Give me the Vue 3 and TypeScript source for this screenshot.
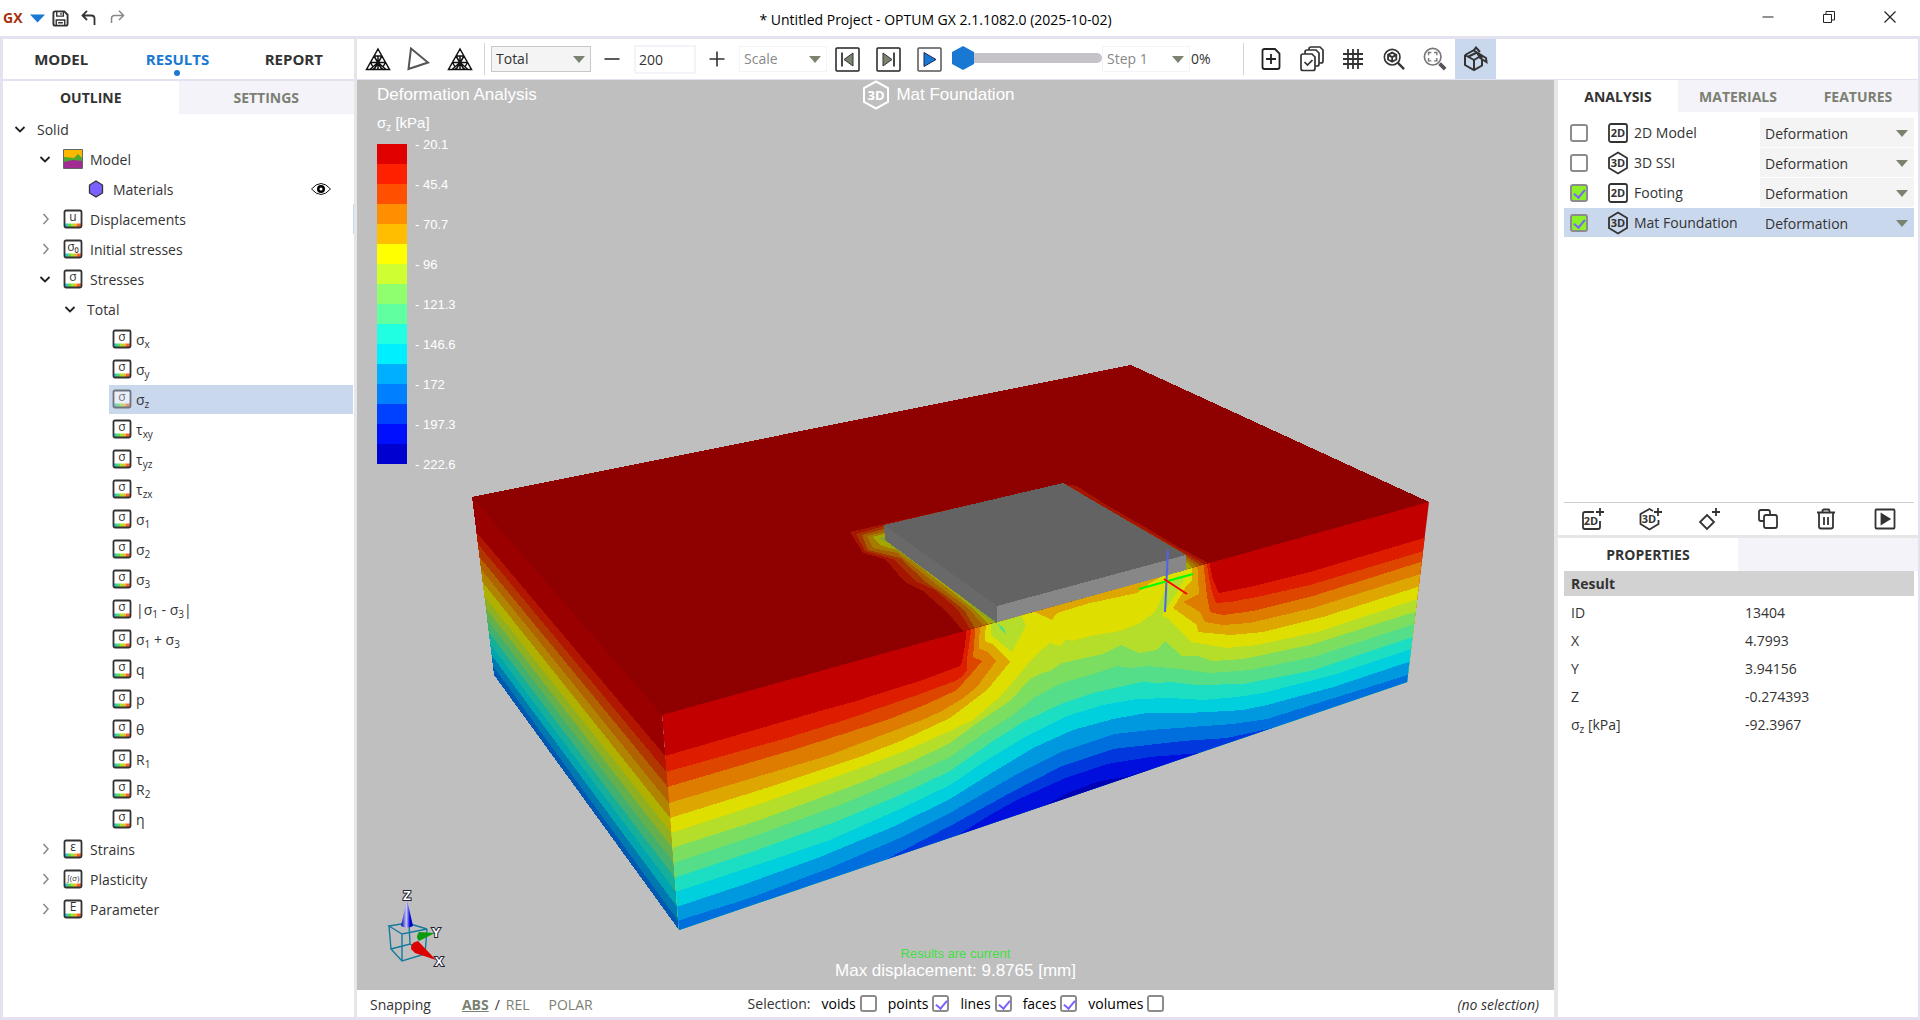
<script setup lang="ts">
import { ref } from 'vue'

interface TreeRow {
  id: string
  label: string
  kind: 'root' | 'group' | 'material' | 'sub' | 'leaf'
  open?: boolean
  glyph?: string
}

interface Analysis {
  id: string
  name: string
  dim: '2D' | '3D'
  checked: boolean
}

type Point = [number, number]

const mainTabs = ['MODEL', 'RESULTS', 'REPORT']
const sideTabs = ['ANALYSIS', 'MATERIALS', 'FEATURES']

const stressLabels = [
  'σ_x', 'σ_y', 'σ_z', 'τ_xy', 'τ_yz', 'τ_zx', 'σ_1', 'σ_2', 'σ_3',
  '|σ_1 - σ_3|', 'σ_1 + σ_3', 'q', 'p', 'θ', 'R_1', 'R_2', 'η',
]

const rows: TreeRow[] = [
  { id: 'solid', label: 'Solid', kind: 'root', open: true },
  { id: 'model', label: 'Model', kind: 'group', open: true },
  { id: 'materials', label: 'Materials', kind: 'material' },
  { id: 'displacements', label: 'Displacements', kind: 'group', glyph: 'u' },
  { id: 'initial', label: 'Initial stresses', kind: 'group', glyph: 'σ₀' },
  { id: 'stresses', label: 'Stresses', kind: 'group', open: true, glyph: 'σ' },
  { id: 'total', label: 'Total', kind: 'sub', open: true },
  ...stressLabels.map((label): TreeRow => ({ id: label, label, kind: 'leaf', glyph: 'σ' })),
  { id: 'strains', label: 'Strains', kind: 'group', glyph: 'ε' },
  { id: 'plasticity', label: 'Plasticity', kind: 'group', glyph: '∫(σ)' },
  { id: 'parameter', label: 'Parameter', kind: 'group', glyph: 'E' },
]

const selectedRow = ref('σ_z')
const scaleValue = ref('200')
const step = ref(0)

const analyses = ref<Analysis[]>([
  { id: 'a1', name: '2D Model', dim: '2D', checked: false },
  { id: 'a2', name: '3D SSI', dim: '3D', checked: false },
  { id: 'a3', name: 'Footing', dim: '2D', checked: true },
  { id: 'a4', name: 'Mat Foundation', dim: '3D', checked: true },
])

const properties = [
  { name: 'ID', value: '13404' },
  { name: 'X', value: '4.7993' },
  { name: 'Y', value: '3.94156' },
  { name: 'Z', value: '-0.274393' },
  { name: 'σ_z [kPa]', value: '-92.3967' },
]

const filters = ref([
  { name: 'voids', on: false },
  { name: 'points', on: true },
  { name: 'lines', on: true },
  { name: 'faces', on: true },
  { name: 'volumes', on: false },
])

/* "σ_x" becomes ['σ', 'x', '']: odd entries are subscripts. */
const parts = (label: string): string[] => label.split(/_([a-z]+|\d)/)

const legendColors = [
  '#e00000', '#ff2000', '#ff5000', '#ff8f00', '#ffbf00', '#ffff00', '#cfff30', '#8fff70',
  '#60ff9f', '#20ffdf', '#00efff', '#00afff', '#0080ff', '#0040ff', '#0010ff', '#0000cf',
]
const legendLabels = ['20.1', '45.4', '70.7', '96', '121.3', '146.6', '172', '197.3', '222.6']

const shade = (hex: string, factor: number): string => {
  const n = parseInt(hex.slice(1), 16)
  const c = [n >> 16, (n >> 8) & 255, n & 255].map((v) => Math.round(v * factor))
  return `rgb(${c.join(',')})`
}
const toPoints = (pts: Point[]): string => pts.map((p) => p.join(',')).join(' ')

/* Contour levels where they meet the left, front and right vertical edges. */
const leftEdge = [497, 532, 544, 557, 569, 582, 596, 608, 620, 632, 644, 655, 666]
const frontEdge = [715, 756, 772, 787, 803, 818, 833, 848, 863, 878, 892, 907, 921]

const leftBands = leftEdge.map((y, i) => {
  const f = frontEdge[i]
  const pts: Point[] = [
    [472 + (22 * (y - 497)) / 178, y],
    [662 + (17 * (f - 715)) / 215, f],
    [679, 930],
    [494, 675],
  ]
  return { color: shade(legendColors[i], 0.69), points: toPoints(pts) }
})

/* Upper boundary of each colour level on the front face. */
const levels: Point[][] = [
  [[660, 705], [1430, 492]],
  [[665, 756], [820, 711], [853, 702], [897, 688], [920, 681], [960, 666], [962, 662], [965, 645], [967, 625], [1209, 560], [1213, 580], [1219, 593], [1250, 587], [1310, 572], [1427, 537]],
  [[666, 772], [787, 738], [845, 720], [920, 694], [955, 681], [962, 677], [967, 670], [967, 660], [972, 624], [1206, 560], [1211, 588], [1216, 603], [1230, 602], [1257, 597], [1310, 585], [1427, 550]],
  [[667, 787], [793, 750], [887, 720], [927, 704], [957, 690], [972, 673], [982, 661], [973, 657], [976, 622], [1203, 560], [1207, 596], [1210, 612], [1223, 615], [1253, 611], [1313, 596], [1427, 560]],
  [[669, 803], [827, 756], [922, 720], [940, 712], [962, 699], [977, 687], [996, 661], [986, 651], [979, 649], [980, 620], [1197, 560], [1199, 594], [1193, 597], [1183, 602], [1200, 612], [1205, 622], [1223, 625], [1250, 623], [1313, 608], [1427, 572]],
  [[670, 818], [760, 790], [860, 757], [903, 740], [950, 718], [987, 690], [1010, 662], [992, 644], [985, 641], [986, 620], [1192, 560], [1192, 581], [1186, 586], [1182, 594], [1173, 608], [1197, 625], [1198, 632], [1230, 635], [1263, 632], [1323, 617], [1427, 584]],
  [[671, 833], [760, 804], [860, 768], [907, 750], [950, 731], [973, 720], [1002, 695], [1027, 665], [1039, 652], [1050, 643], [1060, 646], [1066, 639], [1072, 641], [1090, 636], [1120, 631], [1140, 623], [1155, 612], [1164, 592], [1177, 576], [1184, 576], [1183, 582], [1174, 597], [1162, 615], [1167, 618], [1191, 642], [1227, 648], [1257, 645], [1317, 632], [1427, 596]],
  [[672, 848], [760, 820], [860, 783], [913, 761], [950, 743], [980, 721], [1010, 701], [1030, 679], [1042, 673], [1050, 671], [1062, 663], [1103, 654], [1121, 645], [1139, 653], [1157, 650], [1165, 641], [1182, 656], [1197, 656], [1213, 661], [1243, 659], [1310, 645], [1427, 608]],
  [[673, 863], [760, 834], [840, 805], [900, 780], [950, 757], [983, 734], [1013, 715], [1035, 697], [1062, 683], [1097, 673], [1117, 666], [1130, 668], [1147, 666], [1180, 669], [1210, 673], [1250, 670], [1313, 657], [1427, 620]],
  [[674, 878], [760, 849], [835, 822], [900, 795], [950, 771], [990, 743], [1023, 722], [1063, 703], [1097, 692], [1142, 682], [1157, 683], [1170, 682], [1197, 685], [1243, 684], [1310, 671], [1427, 632]],
  [[675, 892], [760, 864], [830, 840], [900, 809], [950, 785], [990, 758], [1027, 736], [1067, 716], [1103, 705], [1137, 699], [1170, 698], [1203, 700], [1237, 697], [1263, 693], [1333, 675], [1427, 644]],
  [[676, 907], [740, 886], [820, 857], [895, 826], [950, 799], [990, 774], [1033, 748], [1073, 730], [1113, 719], [1147, 713], [1183, 713], [1210, 712], [1243, 710], [1267, 705], [1330, 688], [1427, 656]],
  [[677, 921], [750, 898], [830, 868], [900, 838], [950, 813], [1017, 774], [1063, 751], [1115, 734], [1150, 730], [1233, 724], [1267, 719], [1427, 669]],
  [[883, 861], [927, 838], [950, 826], [1010, 793], [1060, 767], [1113, 749], [1183, 741], [1227, 738], [1277, 727]],
  [[955, 837], [990, 815], [1017, 800], [1063, 779], [1107, 764], [1150, 757], [1200, 753]],
  [[1040, 808], [1070, 792], [1100, 781], [1130, 776], [1150, 769]],
]

const frontBands = levels.map((line, i) => ({
  color: i === 0 ? 'rgb(195,0,0)' : shade(legendColors[i], 0.87),
  points: toPoints([...line, [line[line.length - 1][0], 960], [line[0][0], 960]]),
}))

/* Contours on the ground surface around the footing. */
const surfaceBands = [
  { level: 1, points: '850,532 884,524 1063,484 1077,486 1103,503 1150,530 1180,548 1203,560 1209,564 1186,571 997,623 963,631 948,613 923,591 905,582 885,559 863,553' },
  { level: 2, points: '856,534 884,526 1063,484 1074,489 1095,502 1186,554 1199,561 1205,565 997,622 970,629 958,610 935,590 915,581 893,559 865,551' },
  { level: 3, points: '862,535 884,529 997,560 1186,556 1195,562 1201,566 997,622 975,628 964,610 945,595 927,583 900,558 868,550' },
  { level: 4, points: '867,536 884,532 997,560 1186,559 1192,563 1196,567 997,622 983,625 968,608 937,585 897,553 873,548' },
  { level: 5, points: '872,537 884,534 997,560 1186,562 1192,568 997,622 988,624 970,606 955,594 920,567 900,551 880,545' },
  { level: 6, points: '878,538 884,537 890,545 997,622 993,623 979,612 960,596 900,550 886,542' },
]
const surfaceColor = (level: number): string => shade(legendColors[level], 0.65)
</script>

<template>
  <div class="app">
    <header class="titlebar">
      <div class="quick">
        <strong class="logo">GX</strong>
        <button class="bare" aria-label="File menu">
          <svg width="15" height="9" viewBox="0 0 15 9"><path d="M0 .5h15L7.500 8.500z" fill="#1979d2" /></svg>
        </button>
        <button class="bare" aria-label="Save">
          <svg width="17" height="17" viewBox="0 0 18 18" fill="none" stroke="#333" stroke-width="2">
            <path d="M1.500 3.500q0-2 2-2h9.500l3.500 3.500v9.500q0 2-2 2h-11q-2 0-2-2z" />
            <path d="M5 2v4.500h7V2M4.500 16v-5.500h9V16M9.500 3v2M6.500 13.500h5" stroke-width="1.500" />
          </svg>
        </button>
        <button class="bare undo" aria-label="Undo">
          <svg width="15" height="16" viewBox="0 0 15 16" fill="none" stroke="#333" stroke-width="1.800"><path d="M6 .8 1.500 5.500 6 10M1.500 5.500h9q3 0 3 3V15" /></svg>
        </button>
        <button class="bare" aria-label="Redo">
          <svg width="15" height="16" viewBox="0 0 15 16" fill="none" stroke="#888" stroke-width="1.500"><path d="M9 .8 13.500 5.500 9 10M13.500 5.500h-9q-3 0-3 3V13" /></svg>
        </button>
      </div>
      <h1>* Untitled Project - OPTUM GX 2.1.1082.0 (2025-10-02)</h1>
      <div class="window-buttons">
        <button aria-label="Minimize"><svg width="12" height="12" viewBox="0 0 12 12" stroke="#222"><path d="M.5 6h11" /></svg></button>
        <button aria-label="Restore"><svg width="12" height="12" viewBox="0 0 12 12" fill="none" stroke="#222"><path d="M.5 3.500h8v8h-8zM3 3V.5h8.500V9H9" /></svg></button>
        <button aria-label="Close"><svg width="12" height="12" viewBox="0 0 12 12" stroke="#222" stroke-width="1.200"><path d="M.5.5l11 11M11.500.5l-11 11" /></svg></button>
      </div>
    </header>

    <div class="frame">
      <aside class="left">
        <nav class="main-tabs">
          <button v-for="t in mainTabs" :key="t" :class="{ current: t === 'RESULTS' }">{{ t }}</button>
        </nav>
        <div class="tabs">
          <button class="on">OUTLINE</button>
          <button>SETTINGS</button>
        </div>
        <ul class="tree">
          <li v-for="r in rows" :key="r.id" :class="[r.kind, r.id, { selected: r.id === selectedRow }]" @click="selectedRow = r.id">
            <svg v-if="r.kind !== 'leaf' && r.kind !== 'material'" class="twist" width="20" height="20" viewBox="0 0 20 20" fill="none">
              <path v-if="r.open" d="M5.500 8 10 12.500 14.500 8" stroke="#222" stroke-width="1.800" />
              <path v-else d="M8.500 5 13 10l-4.500 5" stroke="#888" stroke-width="1.500" />
            </svg>
            <svg v-if="r.id === 'model'" width="20" height="20" viewBox="0 0 20 20">
              <path d="M1 1h18v18H1z" fill="#fdb900" />
              <path d="M1 8l10 1 4-4 4 4v10H1z" fill="#4ea72e" />
              <path d="M1 13l9-2 9 1v7H1z" fill="#a02b93" />
              <path d="M.5 .5h19v19H.5z" fill="none" stroke="#666" />
            </svg>
            <svg v-else-if="r.kind === 'material'" width="20" height="20" viewBox="0 0 20 20">
              <path d="M10 2l6.500 4v8L10 18l-6.500-4V6z" fill="#7b61ff" stroke="#333" stroke-width="1.300" />
            </svg>
            <svg v-else-if="r.glyph" class="result" width="20" height="20" viewBox="0 0 20 20">
              <rect x="1.500" y="1.500" width="17" height="17" rx="1.500" fill="#fff" />
              <path d="M2 14.500h3V18H2z" fill="#30c8d8" /><path d="M5 14.500h3V18H5z" fill="#5ee040" />
              <path d="M8 14.500h3V18H8z" fill="#a8e030" /><path d="M11 14.500h3V18h-3z" fill="#f0b830" />
              <path d="M14 14.500h4V18h-4z" fill="#f06830" />
              <rect x="1.500" y="1.500" width="17" height="17" rx="1.500" fill="none" stroke="#333" stroke-width="1.800" />
              <text x="10" y="12" text-anchor="middle" :class="{ tiny: r.glyph.length > 2 }">{{ r.glyph }}</text>
            </svg>
            <span><template v-for="(p, i) in parts(r.label)" :key="i"><sub v-if="i % 2">{{ p }}</sub><template v-else>{{ p }}</template></template></span>
            <button v-if="r.kind === 'material'" class="bare eye" aria-label="Toggle visibility">
              <svg width="20" height="14" viewBox="0 0 20 14"><path d="M.5 7Q10-4 19.500 7 10 18 .5 7z" fill="#fff" stroke="#111" /><circle cx="10" cy="7" r="4" /><circle cx="10" cy="7" r="1.500" fill="#fff" /></svg>
            </button>
          </li>
        </ul>
      </aside>

      <div class="toolbar">
        <button class="tool" aria-label="Show mesh">
          <svg width="26" height="24" viewBox="0 0 26 24" fill="none" stroke="#111" stroke-width="1.500"><path d="M13 2 24.500 22.500h-23zM9 9h8M5.500 15.500h15M9 9l8 13.500M17 9 9 22.500M5.500 15.500l4 7M20.500 15.500l-4 7M13 9v13M13 15.500l-8 7M13 15.500l8 7" /></svg>
        </button>
        <button class="tool" aria-label="Show outline">
          <svg width="24" height="24" viewBox="0 0 24 24" fill="none" stroke="#555" stroke-width="2"><path d="M4 1.500 21 15.500 1.500 22z" /></svg>
        </button>
        <button class="tool" aria-label="Show deformed mesh">
          <svg width="26" height="24" viewBox="0 0 26 24" fill="none" stroke="#111" stroke-width="1.500"><path d="M13 2 24.500 22.500h-23zM9 9h8M5.500 15.500h15M9 9l8 13.500M17 9 9 22.500M5.500 15.500l4 7M20.500 15.500l-4 7M13 9v13M13 15.500l-8 7M13 15.500l8 7" /></svg>
        </button>
        <i class="rule first"></i>
        <div class="pick total">
          <select aria-label="Result type"><option>Total</option></select>
          <svg width="12" height="7" viewBox="0 0 12 7"><path d="M0 0h12L6 7z" fill="#7b8370" /></svg>
        </div>
        <button class="bare step" aria-label="Decrease"><svg width="16" height="16" viewBox="0 0 16 16" stroke="#333" stroke-width="1.600"><path d="M.5 8h15" /></svg></button>
        <input v-model="scaleValue" class="amount" aria-label="Scale value">
        <button class="bare step" aria-label="Increase"><svg width="16" height="16" viewBox="0 0 16 16" stroke="#333" stroke-width="1.600"><path d="M.5 8h15M8 .5v15" /></svg></button>
        <div class="pick scale">
          <select aria-label="Scale mode"><option>Scale</option></select>
          <svg width="12" height="7" viewBox="0 0 12 7"><path d="M0 0h12L6 7z" fill="#7b8370" /></svg>
        </div>
        <button class="tool" aria-label="First step">
          <svg width="25" height="25" viewBox="0 0 25 25"><rect x="1" y="1" width="23" height="23" rx="1" fill="#fff" stroke="#222" stroke-width="1.500" /><path d="M18 6v13L9 12.500z" fill="#7b8370" stroke="#333" /><path d="M7 5.500v14" stroke="#333" stroke-width="1.800" /></svg>
        </button>
        <button class="tool" aria-label="Last step">
          <svg width="25" height="25" viewBox="0 0 25 25"><rect x="1" y="1" width="23" height="23" rx="1" fill="#fff" stroke="#222" stroke-width="1.500" /><path d="M7 6v13l9-6.500z" fill="#7b8370" stroke="#333" /><path d="M18 5.500v14" stroke="#333" stroke-width="1.800" /></svg>
        </button>
        <button class="tool" aria-label="Play">
          <svg width="25" height="25" viewBox="0 0 25 25"><rect x="1" y="1" width="23" height="23" rx="1" fill="#fff" stroke="#555" stroke-width="1.500" /><path d="M7 5.500v14l12-7z" fill="#1979d2" stroke="#225" /></svg>
        </button>
        <input v-model="step" class="slider" type="range" min="0" max="100" aria-label="Step position">
        <div class="pick scale">
          <select aria-label="Step"><option>Step 1</option></select>
          <svg width="12" height="7" viewBox="0 0 12 7"><path d="M0 0h12L6 7z" fill="#7b8370" /></svg>
        </div>
        <output class="percent">{{ step }}%</output>
        <i class="rule"></i>
        <button class="tool" aria-label="New page">
          <svg width="20" height="22" viewBox="0 0 20 22" fill="none" stroke="#222" stroke-width="1.800"><path d="M1.500 3q0-2 2-2H14l4.500 4.500V19q0 2-2 2h-13q-2 0-2-2zM10 6v10M5 11h10" /></svg>
        </button>
        <button class="tool" aria-label="Layers">
          <svg width="26" height="26" viewBox="0 0 26 26" fill="#fff" stroke="#333" stroke-width="1.700"><path d="M10 3q0-2 2-2h9l3 3v11q0 2-2 2H12z" /><path d="M6 6q0-2 2-2h9l3 3v11q0 2-2 2H8z" /><path d="M2 10q0-2 2-2h9l3 3v11.500q0 2-2 2H4q-2 0-2-2z" /><path d="M5.500 16l3 3 5-5" fill="none" /></svg>
        </button>
        <button class="tool" aria-label="Grid">
          <svg width="20" height="20" viewBox="0 0 20 20" stroke="#333" stroke-width="1.800"><path d="M5 0v20M10 0v20M15 0v20M0 5h20M0 10h20M0 15h20" /></svg>
        </button>
        <button class="tool" aria-label="Zoom to model">
          <svg width="22" height="22" viewBox="0 0 24 24" fill="none" stroke="#333" stroke-width="1.800"><circle cx="10" cy="10" r="8.500" /><path d="M16 16l7 7" stroke-width="2.500" /><path d="M10 5l4.500 2.500v5L10 15l-4.500-2.500v-5zM5.500 7.500 10 10l4.500-2.500M10 10v5" stroke-width="2" /></svg>
        </button>
        <button class="tool" aria-label="Zoom window">
          <svg width="24" height="24" viewBox="0 0 26 26" fill="none" stroke="#777"><circle cx="10.500" cy="10.500" r="9" stroke-width="1.800" /><path d="M18 18l6 6" stroke="#555" stroke-width="4" /><path d="M6 9V6h3M12 6h3v3M15 12v3h-3M9 15H6v-3" stroke-width="1.500" /></svg>
        </button>
        <button class="tool active" aria-label="Clip view">
          <svg width="26" height="26" viewBox="0 0 26 26" fill="none" stroke="#333" stroke-width="2"><path d="M2 9v10l9 5 8-4.500V14M2 9l9 5v10M2 9l9-5 2-2.500 4 4.500M11 14l5-3" /><path d="M5.500 10.500 14 6.500M10 4l13 8 .5 4-6.500-4M14 6.500l3 5.500M17 8l2 4" /></svg>
        </button>
      </div>

      <main class="viewport">
        <svg class="scene" viewBox="357 80 1197 910" role="img" aria-label="Vertical stress contours of a mat foundation">
          <defs>
            <clipPath id="front"><path d="M662 715 664 711 1425 501 1429 502 1407 682 679 930z" /></clipPath>
            <clipPath id="top"><path d="M472 497 1125 366 1131 365 1429 502 662 715z" /></clipPath>
            <linearGradient id="zcone"><stop offset="0" stop-color="#0000a0" /><stop offset=".45" stop-color="#c8c8ff" /><stop offset=".75" stop-color="#0000d0" /></linearGradient>
          </defs>
          <g shape-rendering="crispEdges">
            <polygon v-for="(b, i) in leftBands" :key="'l' + i" :points="b.points" :fill="b.color" />
            <g clip-path="url(#front)">
              <polygon v-for="(b, i) in frontBands" :key="'f' + i" :points="b.points" :fill="b.color" />
              <path d="M1033 611 1052 620 1057 613 1090 603 1137 593 1150 583 1167 574 1160 565z" fill="#dea600" />
              <path d="M991 620 1020 614 1026 625 1012 652 991 635z" fill="#b4de2a" />
              <path d="M998 624 1004 628 1006 634 1001 630z" fill="#54de8a" />
            </g>
            <path d="M472 497 1125 366 1131 365 1429 502 662 715z" fill="#8f0000" />
            <g clip-path="url(#top)">
              <polygon v-for="b in surfaceBands" :key="b.level" :points="b.points" :fill="surfaceColor(b.level)" />
            </g>
            <path d="M884 525 1063 483 1186 555 997 606z" fill="#636363" />
            <path d="M884 525 997 606v17L885 540z" fill="#696969" />
            <path d="M997 606 1186 555v15L997 622z" fill="#878787" />
          </g>
          <g stroke-width="2" fill="none">
            <path d="M1168 550 1165 612" stroke="#5064e6" />
            <path d="M1139 589 1193 574" stroke="#00ff00" />
            <path d="M1164 579 1187 594" stroke="#ff0000" />
          </g>
          <g class="gizmo">
            <g fill="none" stroke="#157a9e" stroke-width="1.400">
              <path d="M389 926 407 923 427 929 402 934zM391 949 402 961 425 954 410 944zM389 926 391 949M402 934V961M427 929 425 954M409 923 410 944" />
            </g>
            <path d="M407 900 401 926q6 3 12 0z" fill="url(#zcone)" />
            <path d="M435 933 419 932q-4 5 0 9z" fill="#0a9a10" />
            <path d="M436 960 418 941q-8 2-7 8l4 4z" fill="#dd0000" />
            <text x="407" y="900">Z</text>
            <text x="436" y="937">Y</text>
            <text x="439" y="966">X</text>
          </g>
        </svg>

        <div class="overlay">
          <div class="top-row">
            <span>Deformation Analysis</span>
            <span class="case">
              <svg width="28" height="30" viewBox="0 0 28 30"><path d="M14 1.500l12 6.500v14l-12 6.500L2 22V8z" fill="none" stroke="#fff" stroke-width="2" /><text x="14" y="20" text-anchor="middle">3D</text></svg>
              Mat Foundation
            </span>
          </div>
          <div class="unit">σ<sub>z</sub> [kPa]</div>
          <div class="legend">
            <div class="swatches"><i v-for="c in legendColors" :key="c" :style="{ background: c }"></i></div>
            <ul><li v-for="l in legendLabels" :key="l">- {{ l }}</li></ul>
          </div>
          <div class="messages">
            <span class="fresh">Results are current</span>
            <span>Max displacement: 9.8765 [mm]</span>
          </div>
        </div>
      </main>

      <footer class="status">
        <div class="snap">
          <span>Snapping</span>
          <span class="modes"><button class="abs">ABS</button>/<button>REL</button></span>
          <button>POLAR</button>
        </div>
        <div class="filters">
          <span>Selection:</span>
          <label v-for="f in filters" :key="f.name">{{ f.name }}<input v-model="f.on" class="box" type="checkbox"></label>
        </div>
        <em>(no selection)</em>
      </footer>

      <aside class="right">
        <div class="tabs upper">
          <button v-for="t in sideTabs" :key="t" :class="{ on: t === 'ANALYSIS' }">{{ t }}</button>
        </div>
        <ul class="analyses">
          <li v-for="a in analyses" :key="a.id" :class="{ selected: a.id === 'a4' }">
            <input :id="a.id" v-model="a.checked" class="box green" type="checkbox">
            <svg class="dim" width="22" height="24" viewBox="0 0 22 24">
              <rect v-if="a.dim === '2D'" x="2" y="3" width="18" height="18" rx="2" />
              <path v-else d="M11 1.500l9 5.500v10l-9 5.500L2 17V7z" />
              <text x="11" y="16" text-anchor="middle">{{ a.dim }}</text>
            </svg>
            <label :for="a.id">{{ a.name }}</label>
            <div class="pick kind">
              <select :aria-label="a.name + ' analysis type'"><option>Deformation</option></select>
              <svg width="12" height="7" viewBox="0 0 12 7"><path d="M0 0h12L6 7z" fill="#7b8370" /></svg>
            </div>
          </li>
        </ul>
        <div class="actions">
          <button aria-label="Add 2D analysis"><svg class="dim" width="24" height="24" viewBox="0 0 24 24"><path d="M13 5H4q-2 0-2 2v13q0 2 2 2h13q2 0 2-2v-6M19 1v8M15 5h8" /><text x="10" y="17.500" text-anchor="middle">2D</text></svg></button>
          <button aria-label="Add 3D analysis"><svg class="dim" width="24" height="24" viewBox="0 0 24 24"><path d="M14 4 10.500 2 1.500 7v10l9 5.500 9-5.500v-4M19 1v8M15 5h8" /><text x="10" y="16" text-anchor="middle">3D</text></svg></button>
          <button aria-label="Add feature"><svg class="dim" width="24" height="24" viewBox="0 0 24 24"><path d="M9 8l7 7-7 7-7-7zM18 1v8M14 5h8" /></svg></button>
          <button aria-label="Duplicate"><svg class="dim" width="22" height="22" viewBox="0 0 22 22"><path d="M7 13H4q-2 0-2-2V4q0-2 2-2h7q2 0 2 2v3M9 7h9q2 0 2 2v9q0 2-2 2H9q-2 0-2-2V9q0-2 2-2z" /></svg></button>
          <button aria-label="Delete"><svg class="dim" width="20" height="22" viewBox="0 0 20 22"><path d="M1 4.500h18M6.500 4V3q0-1.500 1.500-1.500h4q1.500 0 1.500 1.500v1M3 5v13.500q0 2 2 2h10q2 0 2-2V5M8 9v8M12 9v8" /></svg></button>
          <button aria-label="Run"><svg class="dim" width="22" height="22" viewBox="0 0 22 22"><rect x="1.500" y="1.500" width="19" height="19" rx="1" /><path d="M7.500 6v10l8-5z" class="solid" /></svg></button>
        </div>
        <div class="tabs lower"><button class="on">PROPERTIES</button></div>
        <table class="props">
          <colgroup><col class="name"><col></colgroup>
          <thead><tr><th colspan="2">Result</th></tr></thead>
          <tbody>
            <tr v-for="p in properties" :key="p.name">
              <td><template v-for="(s, i) in parts(p.name)" :key="i"><sub v-if="i % 2">{{ s }}</sub><template v-else>{{ s }}</template></template></td>
              <td>{{ p.value }}</td>
            </tr>
          </tbody>
        </table>
      </aside>
    </div>
  </div>
</template>

<style>
body {
  margin: 0;
}
</style>

<style scoped>
.app {
  display: flex;
  flex-direction: column;
  min-height: 100vh;
  box-sizing: border-box;
  background: #fff;
  color: #333;
  font: 14px/20px "Open Sans", "Noto Sans", sans-serif;
}
.app * {
  box-sizing: border-box;
}
button,
input,
select {
  font: inherit;
  color: inherit;
  margin: 0;
  padding: 0;
  border: 0;
  background: none;
}
ul {
  list-style: none;
  margin: 0;
  padding: 0;
}
svg {
  display: block;
  flex: none;
}
sub {
  font-size: 10px;
  line-height: 0;
  vertical-align: -3px;
}

/* Title bar */
.titlebar {
  display: flex;
  align-items: center;
  height: 36px;
}
.quick {
  display: flex;
  align-items: center;
  width: 134px;
  padding-left: 3px;
}
.logo {
  width: 27px;
  color: #a8320f;
  line-height: 16px;
}
.quick .bare + .bare {
  margin-left: 7px;
}
.quick .bare + .undo {
  margin-left: 12px;
}
.quick .undo + .bare {
  margin-left: 14px;
}
.titlebar h1 {
  flex: 1;
  margin: 0;
  padding-top: 4px;
  color: #000;
  font-size: 14px;
  font-weight: 400;
  text-align: center;
}
.window-buttons {
  display: flex;
}
.window-buttons button {
  display: flex;
  justify-content: center;
  width: 61px;
  padding-bottom: 2px;
}

/* Frame */
.frame {
  flex: 1;
  display: grid;
  grid-template-columns: 351px minmax(0, 1fr) 360px;
  grid-template-rows: 41px minmax(0, 1fr) 27px;
  border: solid #e3e2ee;
  border-width: 3px 2px 3px 3px;
}
.left {
  grid-row: 1 / 4;
}
.toolbar {
  grid-column: 2 / 4;
  border-left: 3px solid #e6e6e6;
}
.viewport,
.status {
  grid-column: 2;
  border: solid #e6e6e6;
  border-width: 0 4px 0 3px;
}
.right {
  grid-column: 3;
  grid-row: 2 / 4;
}

/* Tabs */
.main-tabs {
  display: flex;
  height: 42px;
  padding-right: 2px;
  border-bottom: 2px solid #e3e2ee;
}
.main-tabs button {
  position: relative;
  flex: 1;
  font-size: 15px;
  font-weight: 700;
}
.main-tabs .current {
  color: #1979d2;
}
.main-tabs .current::after {
  content: "";
  position: absolute;
  left: 50%;
  bottom: 3px;
  width: 6px;
  height: 6px;
  margin-left: -3px;
  border-radius: 50%;
  background: #1979d2;
}
.tabs {
  display: flex;
  height: 33px;
  background: #f4f3f9;
}
.tabs button {
  flex: 1;
  color: #7b8073;
  font-weight: 700;
}
.tabs .on {
  background: #fff;
  color: #333;
}
.tabs.upper {
  height: 32px;
}
.upper button {
  padding-top: 2px;
}
.tabs.lower {
  height: 36px;
  border-top: 3px solid #e6e6e6;
}
.lower button {
  flex: none;
  width: 50%;
}

/* Outline tree */
.tree li {
  display: flex;
  align-items: center;
  height: 30px;
  padding-left: 32px;
}
.tree .root {
  padding-left: 7px;
}
.tree .sub {
  padding-left: 57px;
}
.tree .material {
  padding-left: 83px;
}
.tree .leaf {
  margin: 0 1px 0 106px;
  padding-left: 3px;
  border-top: 1px solid #fff;
}
.tree .leaf svg {
  margin-bottom: 2px;
}
.tree .displacements {
  border-right: 1px solid #cad8ee;
}
.tree .selected {
  background: #cad8ee;
}
.tree .selected .result {
  opacity: 0.6;
}
.twist {
  margin-right: 8px;
}
.tree span {
  margin-left: 7px;
  padding-top: 2px;
}
.tree .root span,
.tree .sub span {
  margin-left: -1px;
}
.tree .leaf span {
  margin-left: 4px;
  padding-top: 0;
}
.result text {
  font-size: 12px;
  fill: #333;
}
.result .tiny {
  font-size: 8px;
}
.eye {
  margin: 0 23px 0 auto;
}

/* Toolbar */
.toolbar {
  display: flex;
  align-items: center;
  border-bottom: 1px solid #e3e2ee;
}
.tool {
  display: flex;
  align-items: center;
  justify-content: center;
  flex: none;
  width: 41px;
  height: 40px;
}
.active {
  background: #cad8ee;
}
.rule {
  flex: none;
  width: 1px;
  height: 32px;
  margin: 0 6px 0 0;
  background: #d4d4d4;
}
.rule.first {
  margin-left: 4px;
}
.pick {
  position: relative;
  flex: none;
}
.pick select {
  width: 100%;
  height: 100%;
  padding-left: 4px;
  border: 1px solid #f4f3f9;
  appearance: none;
}
.pick svg {
  position: absolute;
  right: 6px;
  top: 50%;
  margin-top: -3px;
  pointer-events: none;
}
.total {
  width: 100px;
  height: 26px;
}
.total select {
  border-color: #c8c8c8;
  background: #f4f4f4;
}
.scale {
  width: 88px;
  height: 26px;
  color: #888;
}
.step {
  display: flex;
  justify-content: center;
  flex: none;
  width: 28px;
  margin: 0 8px 0 7px;
}
.amount {
  flex: none;
  width: 62px;
  height: 29px;
  padding-left: 3px;
  border: 2px solid #f4f3f9;
}
.slider {
  flex: none;
  width: 150px;
  height: 26px;
  margin: 0 0 2px 2px;
  appearance: none;
}
.slider::-webkit-slider-runnable-track {
  height: 10px;
  border-radius: 5px;
  background: #c5c3c9;
}
.slider::-webkit-slider-thumb {
  width: 22px;
  height: 24px;
  margin-top: -7px;
  background: #1979d2;
  clip-path: polygon(50% 0, 100% 25%, 100% 75%, 50% 100%, 0 75%, 0 25%);
  appearance: none;
}
.percent {
  width: 53px;
  padding-left: 1px;
}

/* Viewport */
.viewport {
  position: relative;
  background: #bfbfbf;
  color: #fff;
  font: 17px/20px "Liberation Sans", Arial, sans-serif;
}
.scene {
  position: absolute;
  inset: 0;
  width: 100%;
  height: 100%;
}
.gizmo text {
  fill: #fff;
  stroke: #223;
  stroke-width: 2px;
  paint-order: stroke;
  font-size: 13px;
  font-weight: 700;
  text-anchor: middle;
}
.overlay {
  position: relative;
  display: flex;
  flex-direction: column;
  height: 100%;
  padding-left: 20px;
}
.top-row {
  display: grid;
  grid-template-columns: 1fr auto 1fr;
  height: 32px;
  padding: 5px 54px 0 0;
}
.case {
  display: flex;
  gap: 6px;
}
.case svg {
  margin-top: -5px;
}
.case text {
  fill: #fff;
  font: 700 13px "Open Sans", sans-serif;
}
.unit {
  height: 22px;
  padding-top: 1px;
  font-size: 15px;
}
.legend {
  display: flex;
  gap: 8px;
}
.swatches {
  width: 30px;
  padding-top: 10px;
}
.swatches i {
  display: block;
  height: 20px;
}
.legend ul {
  padding-top: 1px;
}
.legend li {
  height: 40px;
  font-size: 13px;
}
.messages {
  display: flex;
  flex-direction: column;
  align-items: center;
  margin: auto 20px 9px 0;
}
.fresh {
  color: #3fe03f;
  font-size: 13px;
  line-height: 14px;
}

/* Status bar */
.status {
  display: grid;
  grid-template-columns: 1fr auto 1fr;
  align-items: center;
  padding: 0 15px 0 13px;
}
.snap {
  display: flex;
  padding-top: 2px;
  color: #7b8073;
}
.snap span {
  color: #333;
}
.snap .modes {
  display: flex;
  gap: 6px;
  margin: 0 19px 0 31px;
}
.modes button {
  color: #7b8073;
}
.modes .abs {
  font-weight: 700;
  text-decoration: underline;
}
.filters {
  display: flex;
  gap: 11px;
  margin-left: 3px;
}
.filters label {
  display: flex;
  align-items: center;
  gap: 4px;
  color: #000;
}
.status em {
  padding-top: 2px;
  text-align: right;
}
.box {
  position: relative;
  width: 17px;
  height: 17px;
  border: 2px solid #8c8c8c;
  border-radius: 3px;
  background: #fff;
  appearance: none;
}
.box:checked::after {
  content: "";
  position: absolute;
  left: 4px;
  top: 1px;
  width: 5px;
  height: 9px;
  border: solid #7b61ff;
  border-width: 0 2px 2px 0;
  transform: rotate(40deg);
}
.green {
  flex: none;
  width: 18px;
  height: 18px;
}
.green:checked {
  background: #8cf02a;
}

/* Right panel */
.right {
  display: flex;
  flex-direction: column;
}
.analyses {
  height: 385px;
  margin: 6px 4px 0 6px;
  border-bottom: 1px solid #cfcfcf;
}
.analyses li {
  display: flex;
  align-items: center;
  height: 30px;
  padding-left: 6px;
  border-bottom: 1px solid #fff;
}
.analyses .selected {
  background: #cad8ee;
}
.dim {
  fill: none;
  stroke: #333;
  stroke-width: 1.8px;
}
.dim text {
  fill: #333;
  stroke: none;
  font-size: 11px;
  font-weight: 700;
}
.dim .solid {
  fill: #333;
}
.analyses .dim {
  margin: 0 5px 0 19px;
}
.analyses label {
  flex: 1;
}
.kind {
  width: 154px;
  height: 29px;
}
.kind select {
  border: 0;
  padding: 2px 0 0 5px;
  background: #f4f4f4;
}
.selected .kind select {
  background: none;
}
.actions {
  display: flex;
  flex: none;
  height: 32px;
  margin: 0 4px 0 6px;
}
.actions button {
  display: flex;
  align-items: center;
  justify-content: center;
  flex: 1;
}
.props {
  margin: 0 4px 0 6px;
  border-spacing: 0;
  table-layout: fixed;
}
.props .name {
  width: 174px;
}
.props th {
  height: 25px;
  padding: 0 7px;
  background: #d2d2d2;
  text-align: left;
}
.props td {
  height: 28px;
  padding: 5px 7px 0;
}
</style>
